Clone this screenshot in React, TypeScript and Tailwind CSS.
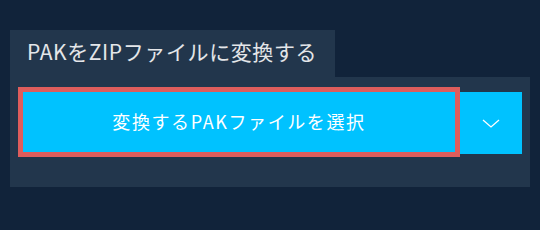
import React from 'react';

export default function App() {
  return (
    <div
      className="w-[540px] h-[230px] bg-[#11233a] pt-[30px] pl-[10px]"
      style={{ fontFamily: '"Noto Sans CJK JP", "Noto Sans", sans-serif' }}
    >
      <div className="w-[325px] h-[47px] bg-[#22364c] flex items-center pl-[17px] pb-[4px]">
        <span className="whitespace-nowrap text-[21px] leading-none tracking-[0.6px] text-[#e4e6e9]">PAKをZIPファイルに変換する</span>
      </div>
      <div className="w-[520px] h-[110px] bg-[#22364c] pt-[10px] pl-[8px]">
        <div className="flex items-start">
          <button className="w-[442px] h-[70px] border-[5px] border-[#de5d5c] bg-[#00c2ff] flex items-center justify-center pb-[2px] text-white text-[18px] tracking-[1.6px]">
            変換するPAKファイルを選択
          </button>
          <button className="mt-[5px] w-[62px] h-[62px] bg-[#00c2ff] flex items-center justify-center">
            <svg width="18" height="9" viewBox="0 0 18 9" fill="none">
              <path d="M1 1l8 7 8-7" stroke="white" strokeWidth="1.3" />
            </svg>
          </button>
        </div>
      </div>
    </div>
  );
}
